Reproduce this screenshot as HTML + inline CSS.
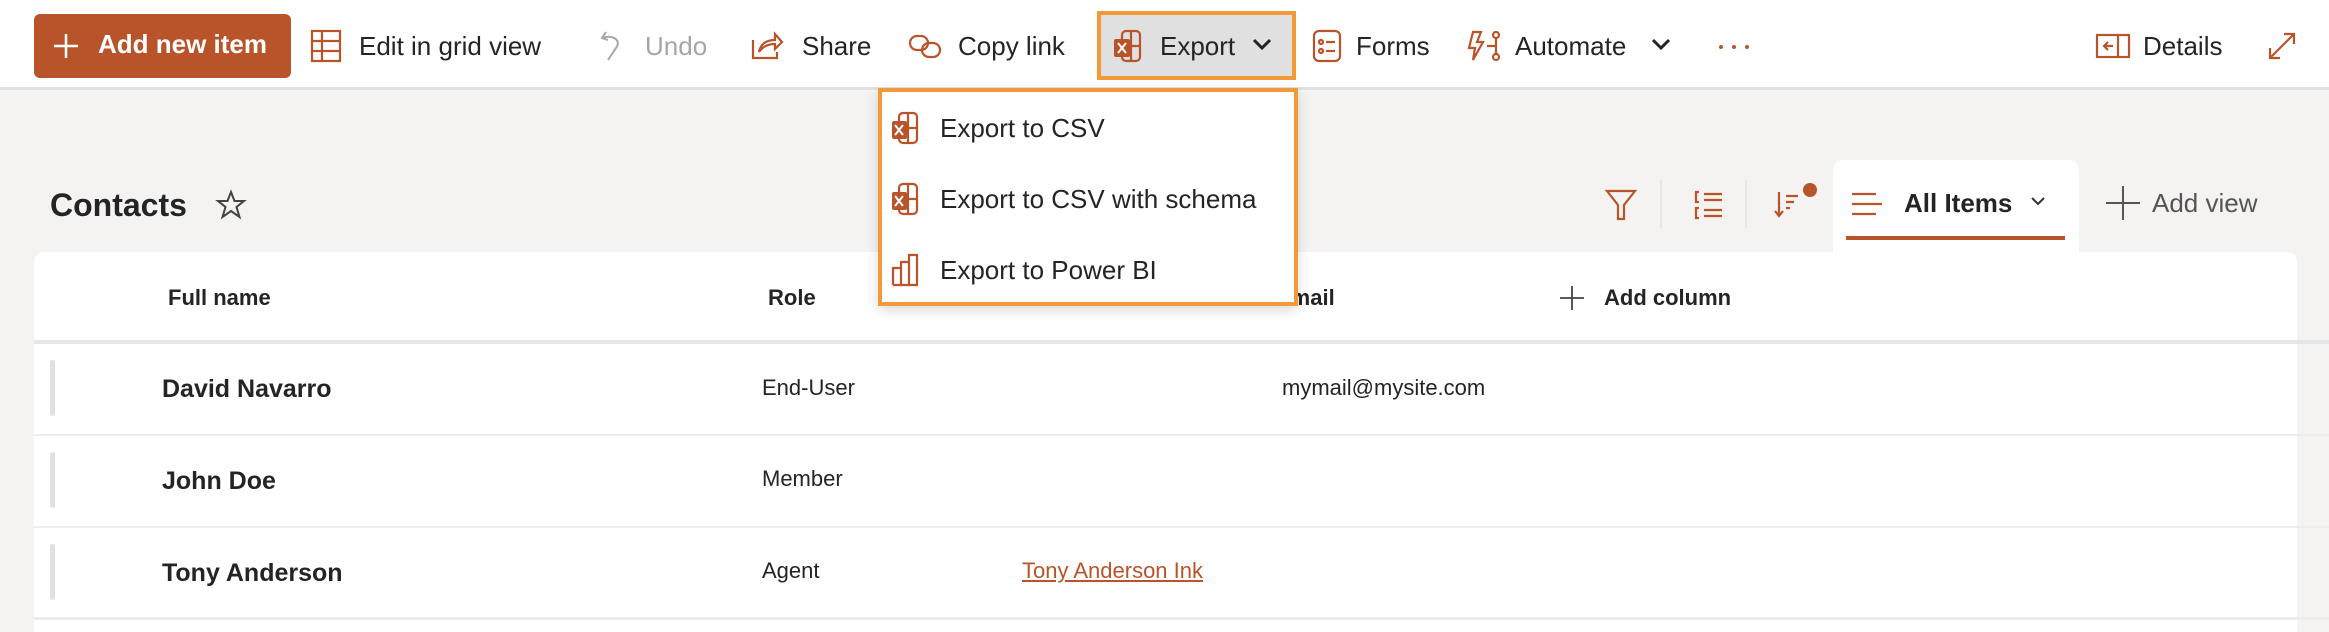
<!DOCTYPE html>
<html><head><meta charset="utf-8">
<style>
*{margin:0;padding:0;box-sizing:border-box}
body{width:2329px;height:622px;overflow:hidden;font-family:"Liberation Sans",sans-serif;background:#f4f3f2;position:relative;color:#242424}
.a{position:absolute;white-space:nowrap}
.tb{position:absolute;left:0;top:0;width:2329px;height:90px;background:#fff;border-bottom:3px solid #e1e1e1}
.t{font-size:26px;color:#242424}
svg{position:absolute;overflow:visible}
.ic{stroke:#b9542a;fill:none;stroke-width:2.2}
</style></head><body>
<div class="tb"></div>
<!-- Add new item -->
<div class="a" style="left:34px;top:14px;width:257px;height:64px;background:#b9542a;border-radius:6px"></div>
<svg style="left:52px;top:32px" width="28" height="28"><path d="M14 2V26M2 14H26" stroke="#fff" stroke-width="2.5"/></svg>
<div class="a" style="left:98px;top:29px;font-size:26px;font-weight:bold;color:#fff">Add new item</div>
<!-- grid -->
<svg style="left:311px;top:30px" width="30" height="32" class="ic"><rect x="1" y="1" width="28" height="30" class="ic"/><path d="M1 11H29M1 21H29M11 1V31" class="ic"/></svg>
<div class="a t" style="left:359px;top:31px">Edit in grid view</div>
<!-- undo -->
<svg style="left:598px;top:30px" width="26" height="32"><path d="M8 2L4 8L10 10M4 8C14 4 24 10 18 18L10 30" stroke="#a6a6a6" fill="none" stroke-width="2"/></svg>
<div class="a t" style="left:645px;top:31px;color:#a6a6a6">Undo</div>
<!-- share -->
<svg style="left:751px;top:30px" width="32" height="30"><path d="M2 10V28H26V22M8 22C10 12 18 10 24 10V4L31 12L24 19V14C18 14 12 16 8 22Z" stroke="#b9542a" fill="none" stroke-width="2.2"/></svg>
<div class="a t" style="left:802px;top:31px">Share</div>
<!-- link -->
<svg style="left:909px;top:34px" width="34" height="26"><rect x="1" y="2" width="18" height="14" rx="7" class="ic"/><rect x="13" y="9" width="18" height="14" rx="7" class="ic"/></svg>
<div class="a t" style="left:958px;top:31px">Copy link</div>
<!-- Export -->
<div class="a" style="left:1097px;top:11px;width:199px;height:69px;background:#e0e0e0;border:4px solid #f29a38"></div>
<svg style="left:1113px;top:30px" width="30" height="32"><rect x="9" y="1" width="18" height="30" rx="4" class="ic"/><path d="M18 1V31M9 16H27" class="ic"/><rect x="1" y="9" width="16" height="18" rx="2" fill="#b9542a"/><path d="M5 13L13 23M13 13L5 23" stroke="#fff" stroke-width="2"/></svg>
<div class="a t" style="left:1160px;top:31px">Export</div>
<svg style="left:1252px;top:38px" width="20" height="14"><path d="M2 2L10 10L18 2" stroke="#242424" fill="none" stroke-width="3"/></svg>
<!-- Forms -->
<svg style="left:1313px;top:30px" width="28" height="32"><rect x="1" y="1" width="26" height="30" rx="5" class="ic"/><circle cx="8" cy="12" r="2" class="ic"/><circle cx="8" cy="21" r="2" class="ic"/><path d="M13 12H22M13 21H22" class="ic"/></svg>
<div class="a t" style="left:1356px;top:31px">Forms</div>
<!-- Automate -->
<svg style="left:1467px;top:30px" width="34" height="32"><path d="M6 2H14L10 12H16L6 30L8 18H2Z" class="ic"/><circle cx="29" cy="5" r="3" class="ic"/><circle cx="29" cy="27" r="3" class="ic"/><path d="M29 8V24M20 16H29" class="ic"/></svg>
<div class="a t" style="left:1515px;top:31px">Automate</div>
<svg style="left:1651px;top:38px" width="20" height="14"><path d="M2 2L10 10L18 2" stroke="#242424" fill="none" stroke-width="3"/></svg>
<svg style="left:1718px;top:44px" width="32" height="6"><circle cx="3" cy="3" r="2" fill="#b9542a"/><circle cx="16" cy="3" r="2" fill="#b9542a"/><circle cx="29" cy="3" r="2" fill="#b9542a"/></svg>
<!-- Details -->
<svg style="left:2096px;top:34px" width="34" height="24"><rect x="1" y="1" width="32" height="22" class="ic"/><path d="M22 1V23M17 12H8M12 8L8 12L12 16" class="ic"/></svg>
<div class="a t" style="left:2143px;top:31px">Details</div>
<svg style="left:2268px;top:32px" width="28" height="28"><path d="M2 26L26 2M16 2H26V12M2 16V26H12" class="ic"/></svg>

<!-- Contacts -->
<div class="a" style="left:50px;top:187px;font-size:32px;font-weight:bold;color:#242424">Contacts</div>
<svg style="left:216px;top:190px" width="30" height="30"><path d="M15 2L18.5 11H28L20.5 17L23.5 27L15 21L6.5 27L9.5 17L2 11H11.5Z" stroke="#444" fill="none" stroke-width="2"/></svg>

<!-- right tools -->
<svg style="left:1606px;top:190px" width="30" height="30"><path d="M1 1H29L18 15V29H12V15Z" class="ic"/></svg>
<div class="a" style="left:1660px;top:180px;width:2px;height:48px;background:#e6e6e6"></div>
<svg style="left:1694px;top:190px" width="30" height="30"><path d="M5 2H2V12H5M5 18H2V28H5M10 4H28M10 10H28M10 20H28M10 26H28" class="ic"/></svg>
<div class="a" style="left:1745px;top:180px;width:2px;height:48px;background:#e6e6e6"></div>
<svg style="left:1774px;top:182px" width="44" height="36"><path d="M5 10V34M1 29L5 34L9 29M12 14H24M12 20H20M12 26H16" class="ic"/><circle cx="36" cy="8" r="7" fill="#b9542a"/></svg>
<div class="a" style="left:1833px;top:160px;width:246px;height:92px;background:#fff;border-radius:10px 10px 0 0"></div>
<svg style="left:1852px;top:192px" width="30" height="24"><path d="M0 2H24M0 12H30M0 22H24" class="ic"/></svg>
<div class="a" style="left:1904px;top:188px;font-size:26px;font-weight:bold">All Items</div>
<svg style="left:2030px;top:196px" width="16" height="10"><path d="M2 2L8 8L14 2" stroke="#333" fill="none" stroke-width="2"/></svg>
<div class="a" style="left:1846px;top:236px;width:219px;height:4px;background:#b9542a"></div>
<svg style="left:2106px;top:186px" width="34" height="34"><path d="M17 0V34M0 17H34" stroke="#555" stroke-width="2"/></svg>
<div class="a" style="left:2152px;top:188px;font-size:26px;color:#555">Add view</div>

<!-- table -->
<div class="a" style="left:34px;top:252px;width:2263px;height:380px;background:#fff;border-radius:10px 10px 0 0"></div>
<div class="a" style="left:168px;top:285px;font-size:22px;font-weight:bold">Full name</div>
<div class="a" style="left:768px;top:285px;font-size:22px;font-weight:bold">Role</div>
<div class="a" style="left:1276px;top:285px;font-size:22px;font-weight:bold">Email</div>
<svg style="left:1560px;top:286px" width="24" height="24"><path d="M12 0V24M0 12H24" stroke="#444" stroke-width="1.8"/></svg>
<div class="a" style="left:1604px;top:285px;font-size:22px;font-weight:bold">Add column</div>
<div class="a" style="left:34px;top:340px;width:2295px;height:4px;background:#e6e6e6"></div>

<div class="a" style="left:50px;top:360px;width:5px;height:56px;background:#e0e0e0;border-radius:3px"></div>
<div class="a" style="left:162px;top:375px;font-size:25px;font-weight:bold">David Navarro</div>
<div class="a" style="left:762px;top:375px;font-size:22px">End-User</div>
<div class="a" style="left:1282px;top:375px;font-size:22px">mymail@mysite.com</div>
<div class="a" style="left:34px;top:434px;width:2295px;height:2px;background:#ededed"></div>

<div class="a" style="left:50px;top:452px;width:5px;height:56px;background:#e0e0e0;border-radius:3px"></div>
<div class="a" style="left:162px;top:467px;font-size:25px;font-weight:bold">John Doe</div>
<div class="a" style="left:762px;top:466px;font-size:22px">Member</div>
<div class="a" style="left:34px;top:526px;width:2295px;height:2px;background:#ededed"></div>

<div class="a" style="left:50px;top:544px;width:5px;height:56px;background:#e0e0e0;border-radius:3px"></div>
<div class="a" style="left:162px;top:559px;font-size:25px;font-weight:bold">Tony Anderson</div>
<div class="a" style="left:762px;top:558px;font-size:22px">Agent</div>
<div class="a" style="left:1022px;top:558px;font-size:22px;color:#b9542a;text-decoration:underline">Tony Anderson Ink</div>
<div class="a" style="left:34px;top:617px;width:2295px;height:3px;background:#ededed"></div>

<!-- dropdown -->
<div class="a" style="left:878px;top:88px;width:420px;height:218px;background:#fff;border:4px solid #f29a38;box-shadow:0 4px 12px rgba(0,0,0,.15)"></div>
<svg style="left:891px;top:112px" width="28" height="32"><rect x="8" y="1" width="18" height="30" rx="4" class="ic"/><path d="M17 1V31M8 16H26" class="ic"/><rect x="1" y="9" width="15" height="18" rx="2" fill="#b9542a"/><path d="M4 13L12 23M12 13L4 23" stroke="#fff" stroke-width="2"/></svg>
<div class="a t" style="left:940px;top:113px">Export to CSV</div>
<svg style="left:891px;top:183px" width="28" height="32"><rect x="8" y="1" width="18" height="30" rx="4" class="ic"/><path d="M17 1V31M8 16H26" class="ic"/><rect x="1" y="9" width="15" height="18" rx="2" fill="#b9542a"/><path d="M4 13L12 23M12 13L4 23" stroke="#fff" stroke-width="2"/></svg>
<div class="a t" style="left:940px;top:184px">Export to CSV with schema</div>
<svg style="left:892px;top:254px" width="28" height="32"><path d="M1 31V14H9V31M9 31V8H17V31M17 31V1H25V31H1" class="ic"/></svg>
<div class="a t" style="left:940px;top:255px">Export to Power BI</div>
</body></html>
